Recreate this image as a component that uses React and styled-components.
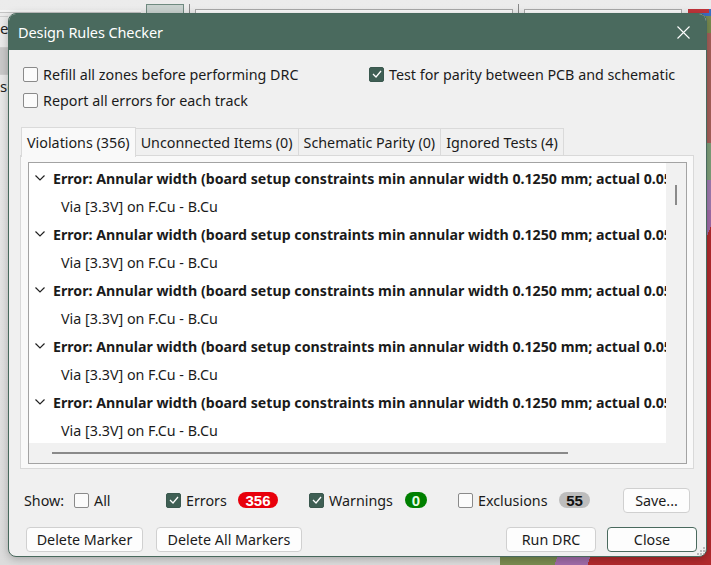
import React from "react";
import styled, { createGlobalStyle } from "styled-components";

const GlobalStyle = createGlobalStyle`
  html, body {
    margin: 0;
    padding: 0;
    background: #e4e4e4;
  }
  body {
    font-family: "Noto Sans", "Open Sans", sans-serif;
    color: #1b1b1b;
  }
`;

const errorRows = Array.from({ length: 5 }, (_, i) => ({
  id: i,
  title:
    "Error: Annular width (board setup constraints min annular width 0.1250 mm; actual 0.0500 mm)",
  item: "Via [3.3V] on F.Cu - B.Cu",
}));

const tabs = [
  { label: "Violations (356)", active: true },
  { label: "Unconnected Items (0)" },
  { label: "Schematic Parity (0)" },
  { label: "Ignored Tests (4)" },
];

const CheckMark = () => (
  <svg width="10" height="8" viewBox="0 0 10 8">
    <polyline points="1,4 4,7 9,1" fill="none" stroke="#fff" strokeWidth="1.3" />
  </svg>
);

const Check = ({ checked }) => (
  <CheckBox $checked={checked}>{checked && <CheckMark />}</CheckBox>
);

const Chevron = () => (
  <svg width="10" height="6" viewBox="0 0 10 6">
    <polyline points="0.5,0.5 5,5 9.5,0.5" fill="none" stroke="#222" strokeWidth="1.2" />
  </svg>
);

const App = () => {
  return (
    <>
      <GlobalStyle />
      <Desktop>
        <Toolbar>
          <ToolPanel />
          <ToolButton />
          <ToolSep />
          <ToolField $w={316} />
          <ToolSep />
          <ToolField $w={156} />
          <ToolIcon />
        </Toolbar>
        <SidePanel>
          <SideItem>e</SideItem>
          <SideItem $selected>&nbsp;</SideItem>
          <SideItem>se</SideItem>
        </SidePanel>
        <PcbCanvas />

        <Dialog>
          <TitleBar>
            <Title>Design Rules Checker</Title>
            <CloseX>
              <svg width="13" height="13" viewBox="0 0 13 13">
                <path d="M0.5 0.5 L12.5 12.5 M12.5 0.5 L0.5 12.5" stroke="#fff" strokeWidth="1.1" />
              </svg>
            </CloseX>
          </TitleBar>

          <Body>
            <Options>
              <Option>
                <Check />
                Refill all zones before performing DRC
              </Option>
              <Option>
                <Check checked />
                Test for parity between PCB and schematic
              </Option>
              <Option>
                <Check />
                Report all errors for each track
              </Option>
            </Options>

            <Notebook>
              <TabRow>
                {tabs.map((t) => (
                  <Tab key={t.label} $active={t.active}>
                    {t.label}
                  </Tab>
                ))}
              </TabRow>
              <Panel>
                <TreeList>
                  <TreeBody>
                    <TreeRows>
                      {errorRows.map((r) => (
                        <React.Fragment key={r.id}>
                          <ErrorRow>
                            <Chevron />
                            <ErrorText>{r.title}</ErrorText>
                          </ErrorRow>
                          <ItemRow>{r.item}</ItemRow>
                        </React.Fragment>
                      ))}
                    </TreeRows>
                    <VScroll>
                      <VThumb />
                    </VScroll>
                  </TreeBody>
                  <HScrollRow>
                    <HScroll>
                      <HThumb />
                    </HScroll>
                    <ScrollCorner />
                  </HScrollRow>
                </TreeList>
              </Panel>
            </Notebook>

            <ShowRow>
              <span>Show:</span>
              <Filter>
                <Check />
                All
              </Filter>
              <Filter>
                <Check checked />
                Errors
              </Filter>
              <Badge $bg="#e8000b" $fg="#fff" $w={40}>356</Badge>
              <Filter>
                <Check checked />
                Warnings
              </Filter>
              <Badge $bg="#008000" $fg="#e8ffe8" $w={22}>0</Badge>
              <Filter>
                <Check />
                Exclusions
              </Filter>
              <Badge $bg="#bdbdbd" $fg="#111" $w={31}>55</Badge>
              <Button $w={67}>Save...</Button>
            </ShowRow>

            <ButtonRow>
              <ButtonGroup>
                <Button $w={117}>Delete Marker</Button>
                <Button $w={146}>Delete All Markers</Button>
              </ButtonGroup>
              <ButtonGroup $gap={11}>
                <Button $w={90}>Run DRC</Button>
                <Button $w={90} $primary>Close</Button>
              </ButtonGroup>
            </ButtonRow>
          </Body>
          <Grip>
            <svg width="9" height="9" viewBox="0 0 9 9">
              {[[7, 1], [7, 4], [4, 4], [7, 7], [4, 7], [1, 7]].map(([x, y]) => (
                <rect key={`${x}-${y}`} x={x} y={y} width="2" height="2" fill="#b8b8b8" />
              ))}
            </svg>
          </Grip>
        </Dialog>
      </Desktop>
    </>
  );
};

export default App;

const Desktop = styled.div`
  position: relative;
  width: 711px;
  height: 565px;
  overflow: hidden;
  background: linear-gradient(#ececec, #dcdcdc);
`;

const Toolbar = styled.div`
  display: flex;
  align-items: flex-end;
  height: 13px;
  gap: 5px;
`;

const ToolPanel = styled.div`
  width: 141px;
  height: 2px;
  border-bottom: 1px solid #c4c4c4;
  background: #f4f4f4;
`;

const ToolButton = styled.div`
  width: 36px;
  height: 8px;
  border: 1px solid #6f8a80;
  border-bottom: none;
  background: #c9d2cf;
`;

const ToolSep = styled.div`
  width: 1px;
  height: 9px;
  background: #888;
`;

const ToolField = styled.div`
  width: ${(p) => p.$w}px;
  height: 3px;
  border: 1px solid #a8a8a8;
  border-bottom: none;
  background: #fafafa;
`;

const ToolIcon = styled.div`
  width: 21px;
  height: 4px;
  margin-left: 1px;
  background: #c0343a;
  box-shadow: 4px 0 0 #3b6fc4;
`;

const SidePanel = styled.div`
  position: absolute;
  left: 0;
  top: 16px;
  width: 8px;
  overflow: hidden;
  display: flex;
  flex-direction: column;
  font-size: 15px;
  color: #222;
`;

const SideItem = styled.div`
  height: ${(p) => (p.$selected ? 26 : 24)}px;
  margin-top: ${(p) => (p.$selected ? 6 : 0)}px;
  line-height: 22px;
  white-space: nowrap;
  background: ${(p) => (p.$selected ? "#c9c9c9" : "transparent")};
  border-top: 1px solid #cfcfcf;
`;

const PcbCanvas = styled.div`
  position: absolute;
  left: 500px;
  top: 13px;
  right: 0;
  bottom: 0;
  background:
    linear-gradient(180deg, #3b6fc4 0 3px, transparent 3px),
    linear-gradient(180deg, transparent 0 20px, #a8605a 20px 130px, #7fa07a 130px 167px, #a07bb0 167px 197px, transparent 197px),
    linear-gradient(110deg, #a03043 0 30%, #c0304a 30% 38%, #7a8c50 38% 62%, #a06ba8 62% 70%, #b22a2d 70%);
`;

const Dialog = styled.div`
  position: absolute;
  left: 8px;
  top: 13px;
  width: 699px;
  height: 544px;
  box-sizing: border-box;
  border: 1px solid #48695d;
  border-radius: 8px;
  background: #f0f0f0;
  display: flex;
  flex-direction: column;
  overflow: hidden;
  box-shadow: 0 2px 8px rgba(0, 0, 0, 0.25);
`;

const TitleBar = styled.div`
  height: 36px;
  flex: none;
  background: #4a6a5e;
  display: flex;
  align-items: center;
  justify-content: space-between;
  padding: 0 16px 0 9px;
`;

const Title = styled.div`
  color: #fff;
  font-size: 14.5px;
  letter-spacing: -0.1px;
`;

const CloseX = styled.div`
  display: flex;
  align-items: center;
`;

const Body = styled.div`
  flex: 1;
  display: flex;
  flex-direction: column;
  padding: 11px 10px 0 11px;
  font-size: 14.3px;
`;

const Options = styled.div`
  display: grid;
  grid-template-columns: 346px 1fr;
  grid-auto-rows: 26px;
  padding-left: 3px;
`;

const Option = styled.label`
  display: flex;
  align-items: center;
  gap: 5px;
`;

const CheckBox = styled.span`
  width: 15px;
  height: 15px;
  box-sizing: border-box;
  flex: none;
  border-radius: 2px;
  display: flex;
  align-items: center;
  justify-content: center;
  border: 1px solid ${(p) => (p.$checked ? "#3a584e" : "#8a8a8a")};
  background: ${(p) => (p.$checked ? "#3f5f54" : "#fbfbfb")};
`;

const Notebook = styled.div`
  margin-top: 14px;
  display: flex;
  flex-direction: column;
  margin-right: 2px;
`;

const TabRow = styled.div`
  display: flex;
  height: 28px;
  padding-left: 1px;
`;

const Tab = styled.div`
  height: ${(p) => (p.$active ? 30 : 27)}px;
  margin-top: ${(p) => (p.$active ? 0 : 1)}px;
  box-sizing: border-box;
  padding: 0 5px 0 5px;
  display: flex;
  align-items: center;
  border: 1px solid #dadada;
  border-bottom: none;
  margin-right: -1px;
  background: ${(p) => (p.$active ? "#f9f9f9" : "#f0f0f0")};
  position: relative;
  z-index: ${(p) => (p.$active ? 1 : 0)};
  white-space: nowrap;
`;

const Panel = styled.div`
  height: 314px;
  box-sizing: border-box;
  border: 1px solid #d9d9d9;
  background: #f9f9f9;
  padding: 6px 6px 4px 7px;
  display: flex;
`;

const TreeList = styled.div`
  flex: 1;
  border: 1px solid #a3a3a3;
  background: #fff;
  display: flex;
  flex-direction: column;
  overflow: hidden;
`;

const TreeBody = styled.div`
  flex: 1;
  display: flex;
  min-height: 0;
`;

const TreeRows = styled.div`
  flex: 1;
  overflow: hidden;
  padding-top: 1px;
`;

const ErrorRow = styled.div`
  height: 28px;
  display: flex;
  align-items: center;
  gap: 8px;
  padding-left: 6px;
  white-space: nowrap;
  svg {
    flex: none;
  }
`;

const ErrorText = styled.span`
  font-weight: 700;
  font-size: 14.2px;
`;

const ItemRow = styled.div`
  height: 28px;
  display: flex;
  align-items: center;
  padding-left: 32px;
  white-space: nowrap;
`;

const VScroll = styled.div`
  width: 20px;
  flex: none;
  background: #f1f1f1;
  position: relative;
`;

const VThumb = styled.div`
  position: absolute;
  left: 9px;
  top: 22px;
  width: 2px;
  height: 20px;
  background: #8a8a8a;
`;

const HScrollRow = styled.div`
  height: 20px;
  display: flex;
  flex: none;
`;

const HScroll = styled.div`
  flex: 1;
  background: #f1f1f1;
  display: flex;
  align-items: center;
  padding-left: 23px;
`;

const HThumb = styled.div`
  width: 516px;
  height: 2px;
  background: #8a8a8a;
`;

const ScrollCorner = styled.div`
  width: 20px;
  background: #f1f1f1;
`;

const ShowRow = styled.div`
  display: grid;
  grid-template-columns: 50px 92px 72px 71px 96px 53px 101px 64px auto;
  align-items: center;
  height: 26px;
  margin-top: 18px;
  padding-left: 4px;
`;

const Filter = styled.label`
  display: flex;
  align-items: center;
  gap: 5px;
`;

const Badge = styled.span`
  width: ${(p) => p.$w}px;
  height: 16px;
  border-radius: 8px;
  background: ${(p) => p.$bg};
  color: ${(p) => p.$fg};
  font-family: "Liberation Sans", Arial, sans-serif;
  font-weight: 700;
  font-size: 15px;
  display: flex;
  align-items: center;
  justify-content: center;
`;

const Button = styled.button`
  width: ${(p) => p.$w}px;
  height: 25px;
  box-sizing: border-box;
  font: inherit;
  color: #1b1b1b;
  background: #fdfdfd;
  border: 1px solid ${(p) => (p.$primary ? "#4a6a5e" : "#d0d0d0")};
  border-radius: 4px;
  padding: 0;
`;

const ButtonRow = styled.div`
  display: flex;
  justify-content: space-between;
  margin-top: 14px;
  padding-left: 6px;
  margin-right: -1px;
`;

const ButtonGroup = styled.div`
  display: flex;
  gap: ${(p) => p.$gap || 13}px;
`;

const Grip = styled.div`
  position: absolute;
  right: 1px;
  bottom: 1px;
  display: flex;
`;
